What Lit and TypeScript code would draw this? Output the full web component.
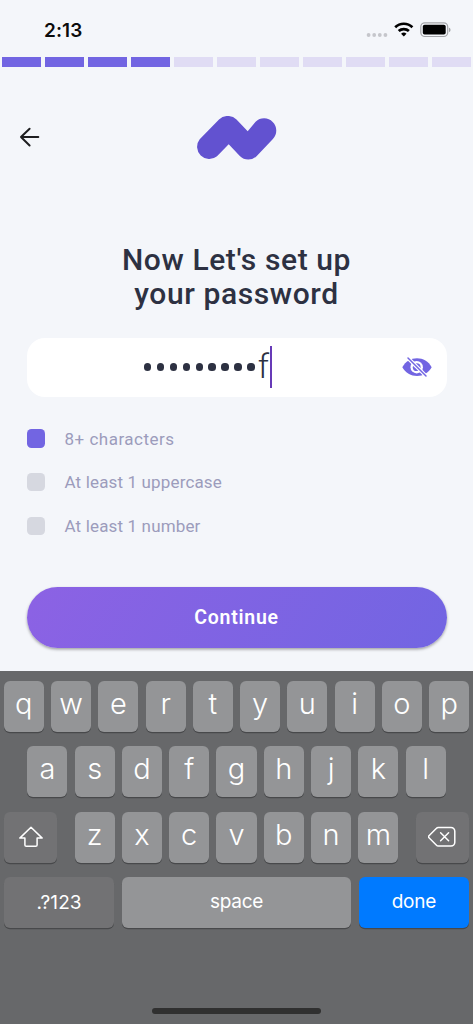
import { LitElement, html, svg, css } from "lit";
import { customElement, property } from "lit/decorators.js";
import { classMap } from "lit/directives/class-map.js";

@customElement("status-bar")
class StatusBar extends LitElement {
  static styles = css`
    :host { display: flex; height: 57px; box-sizing: border-box; padding: 0 22px 0 44px; justify-content: space-between; }
    .time { font: 600 19px/22px Inter, sans-serif; letter-spacing: 0.1px; color: #0b0b0c; margin-top: 20px; }
    svg { display: block; margin-top: 18px; }
  `;
  render() {
    return html`
      <div class="time">2:13</div>
      <svg width="86" height="24" viewBox="365 18 86 24">
        ${[368.6, 374.2, 379.8, 385.4].map((x) => svg`<circle cx=${x} cy="35" r="1.9" fill="#c5c6cb" />`)}
        <g fill="none" stroke="#000" stroke-width="2.7">
          <path d="M395.2 27.3a12.2 12.2 0 0 1 17.2 0" />
          <path d="M398.7 31.1a7.4 7.4 0 0 1 10.2 0" />
        </g>
        <path d="M403.8 36.5l-2.7-2.7a4 4 0 0 1 5.4 0z" fill="#000" />
        <rect x="420.8" y="22.8" width="26.9" height="13.7" rx="4" fill="none" stroke="#a3a4a8" stroke-width="1.2" />
        <rect x="422.8" y="24.8" width="22.9" height="9.8" rx="1.8" fill="#000" />
        <path d="M449 27.7c2 .6 2 3.7 0 4.3z" fill="#a3a4a8" />
      </svg>
    `;
  }
}

@customElement("step-progress")
class StepProgress extends LitElement {
  @property({ type: Number }) total = 11;
  @property({ type: Number }) done = 4;
  static styles = css`
    :host { display: grid; grid-auto-flow: column; grid-auto-columns: 1fr; gap: 4.35px; height: 10px; padding: 0 2.3px; }
    .step { background: #e0dcf4; }
    .on { background: #7265e2; }
  `;
  render() {
    return Array.from({ length: this.total }, (_, i) => html`<div class=${classMap({ step: true, on: i < this.done })}></div>`);
  }
}

@customElement("soft-keyboard")
class SoftKeyboard extends LitElement {
  static styles = css`
    :host { display: flex; flex-direction: column; gap: 14.6px; height: 353px; box-sizing: border-box; padding: 9.6px 3.8px 0; background: #67686a; font-family: Inter, sans-serif; color: #fff; }
    .row { display: flex; justify-content: center; gap: 7.25px; }
    .wide { justify-content: space-between; }
    .group { display: flex; gap: 7.25px; }
    .key { box-sizing: border-box; width: 40.02px; height: 51px; border-radius: 6px; background: #949597; box-shadow: 0 1.2px 0 #48494b; display: flex; align-items: center; justify-content: center; font-size: 29px; font-weight: 350; line-height: 36px; padding-bottom: 5px; }
    .dark { background: #727274; width: 53.5px; padding: 0; }
    .label { font-size: 19px; font-weight: 400; padding: 0 0 1px; letter-spacing: -0.3px; }
    .side { width: 110.7px; }
    .symbols { letter-spacing: 0.1px; padding: 0; }
    .space { flex: 1; }
    .done { background: #007aff; }
    .bar { width: 169px; height: 6px; border-radius: 3px; background: #303030; margin: 65px auto 0; }
  `;
  private keys(letters: string) {
    return [...letters].map((c) => html`<div class="key">${c}</div>`);
  }
  render() {
    return html`
      <div class="row">${this.keys("qwertyuiop")}</div>
      <div class="row">${this.keys("asdfghjkl")}</div>
      <div class="row wide">
        <div class="key dark">
          <svg width="26" height="24" viewBox="0 0 26 24" fill="none" stroke="#fff" stroke-width="1.5" stroke-linejoin="round">
            <path d="M13 2.3L1.8 13.1h5.1v6.8q0 1.4 1.4 1.4h9.4q1.4 0 1.4-1.4v-6.8h5.1z" />
          </svg>
        </div>
        <div class="group">${this.keys("zxcvbnm")}</div>
        <div class="key dark">
          <svg width="28" height="22" viewBox="0 0 28 22" fill="none" stroke="#fff" stroke-width="1.5" stroke-linejoin="round" stroke-linecap="round">
            <path d="M10.2 1.4H23a3.8 3.8 0 0 1 3.8 3.8v11A3.8 3.8 0 0 1 23 20H10.2q-1 0-1.7-.8L1 11.8q-1-1 0-2L8.5 2.2Q9.2 1.4 10.2 1.4z" />
            <path d="M12.6 6.7l8 8m0-8l-8 8" />
          </svg>
        </div>
      </div>
      <div class="row">
        <div class="key dark label side symbols">.?123</div>
        <div class="key label space">space</div>
        <div class="key label side done">done</div>
      </div>
      <div class="bar"></div>
    `;
  }
}

@customElement("app-root")
class AppRoot extends LitElement {
  static styles = css`
    :host { display: flex; flex-direction: column; width: 473px; height: 1024px; overflow: hidden; background: #f4f6fa; font-family: Roboto, sans-serif; }
    .content { height: 604px; display: flex; flex-direction: column; padding: 0 26.5px; box-sizing: border-box; }
    .header { display: grid; grid-template-columns: 1fr auto 1fr; align-items: center; height: 44px; margin: 49px 0 0 -9px; }
    .header svg { display: block; }
    .logo { margin-left: 9px; }
    h1 { margin: 83px 0 0; text-align: center; font-size: 30px; line-height: 34px; font-weight: 500; color: #2d3142; letter-spacing: 0.6px; }
    .line { display: block; }
    .field { margin-top: 26.5px; height: 59px; flex: none; border-radius: 18px; background: #fff; display: flex; align-items: center; justify-content: flex-end; box-sizing: border-box; padding-right: 14.5px; }
    .value { display: flex; align-items: center; margin-right: 130px; }
    .dots { display: flex; gap: 5.8px; margin-right: 3.2px; }
    .dot { width: 7.2px; height: 7.2px; border-radius: 50%; background: #2d3142; }
    .char { font-size: 34px; line-height: 40px; font-weight: 350; color: #2d3142; width: 11.8px; margin-top: -2px; }
    .caret { width: 2.4px; height: 42px; background: #673ab7; margin-top: -1px; }
    .rules { list-style: none; margin: 31px 0 0; padding: 0; display: grid; row-gap: 21.7px; }
    .rule { display: flex; align-items: center; gap: 19.5px; height: 22px; font-size: 17px; color: #9c9cbc; letter-spacing: 0.15px; }
    .rule:first-child { letter-spacing: 0.5px; }
    .box { width: 18.5px; height: 18.5px; border-radius: 4.5px; background: #d6d8e0; }
    .met { background: #7265e2; }
    .cta { margin-top: 50.2px; height: 60.5px; flex: none; border: 0; border-radius: 31px; padding: 2px 0 0; color: #fff; font: 600 19.5px/24px Roboto, sans-serif; letter-spacing: 0.75px; background: linear-gradient(120deg, #8c62e4, #7265e2); box-shadow: 0 1.5px 3px rgba(0, 0, 0, 0.35); }
  `;
  render() {
    const rules: [string, boolean][] = [["8+ characters", true], ["At least 1 uppercase", false], ["At least 1 number", false]];
    return html`
      <status-bar></status-bar>
      <step-progress></step-progress>
      <div class="content">
        <div class="header">
          <svg width="24" height="24" viewBox="0 0 24 24" fill="none" stroke="#1e1e20" stroke-width="2" stroke-linecap="round" stroke-linejoin="round">
            <path d="M11.6 2.7L3 11l8.6 8.5M3 11H20.3" />
          </svg>
          <svg class="logo" width="81" height="44" viewBox="196 116 81 44" fill="#6252d0">
            <path d="M199.7 139.3L219 119.6A12.3 12.3 0 0 1 236.5 119.6L247.7 131.3L255.6 121.800A12.200 12.200 0 0 1 272.900 139L256.800 156A12 12 0 0 1 239.800 156L228.700 144.200L217 156.300A12.200 12.200 0 0 1 199.700 139.300z" />
          </svg>
        </div>
        <h1><span class="line">Now Let's set up</span><span class="line">your password</span></h1>
        <div class="field">
          <div class="value">
            <div class="dots">${Array.from({ length: 9 }, () => html`<div class="dot"></div>`)}</div>
            <div class="char">f</div>
            <div class="caret"></div>
          </div>
          <svg width="30" height="22" viewBox="0 0 30 22">
            <path d="M.3 11.3C3.5 5.3 9 2.3 15 2.3s11.5 3 14.7 9C26.5 17 21 20 15 20S3.5 17 .3 11.3z" fill="#7265e2" />
            <circle cx="14.7" cy="11.2" r="6.2" fill="#fff" />
            <circle cx="14.7" cy="11.2" r="3.9" fill="#7265e2" />
            <circle cx="13.2" cy="9.7" r="1.5" fill="#fff" />
            <path d="M5.8 1.8L24.5 20.5" stroke="#fff" stroke-width="3.8" />
            <path d="M6 2L24 20" stroke="#7265e2" stroke-width="1.5" stroke-linecap="round" />
          </svg>
        </div>
        <ul class="rules">
          ${rules.map(([text, met]) => html`<li class="rule"><span class=${classMap({ box: true, met })}></span>${text}</li>`)}
        </ul>
        <button class="cta">Continue</button>
      </div>
      <soft-keyboard></soft-keyboard>
    `;
  }
}
